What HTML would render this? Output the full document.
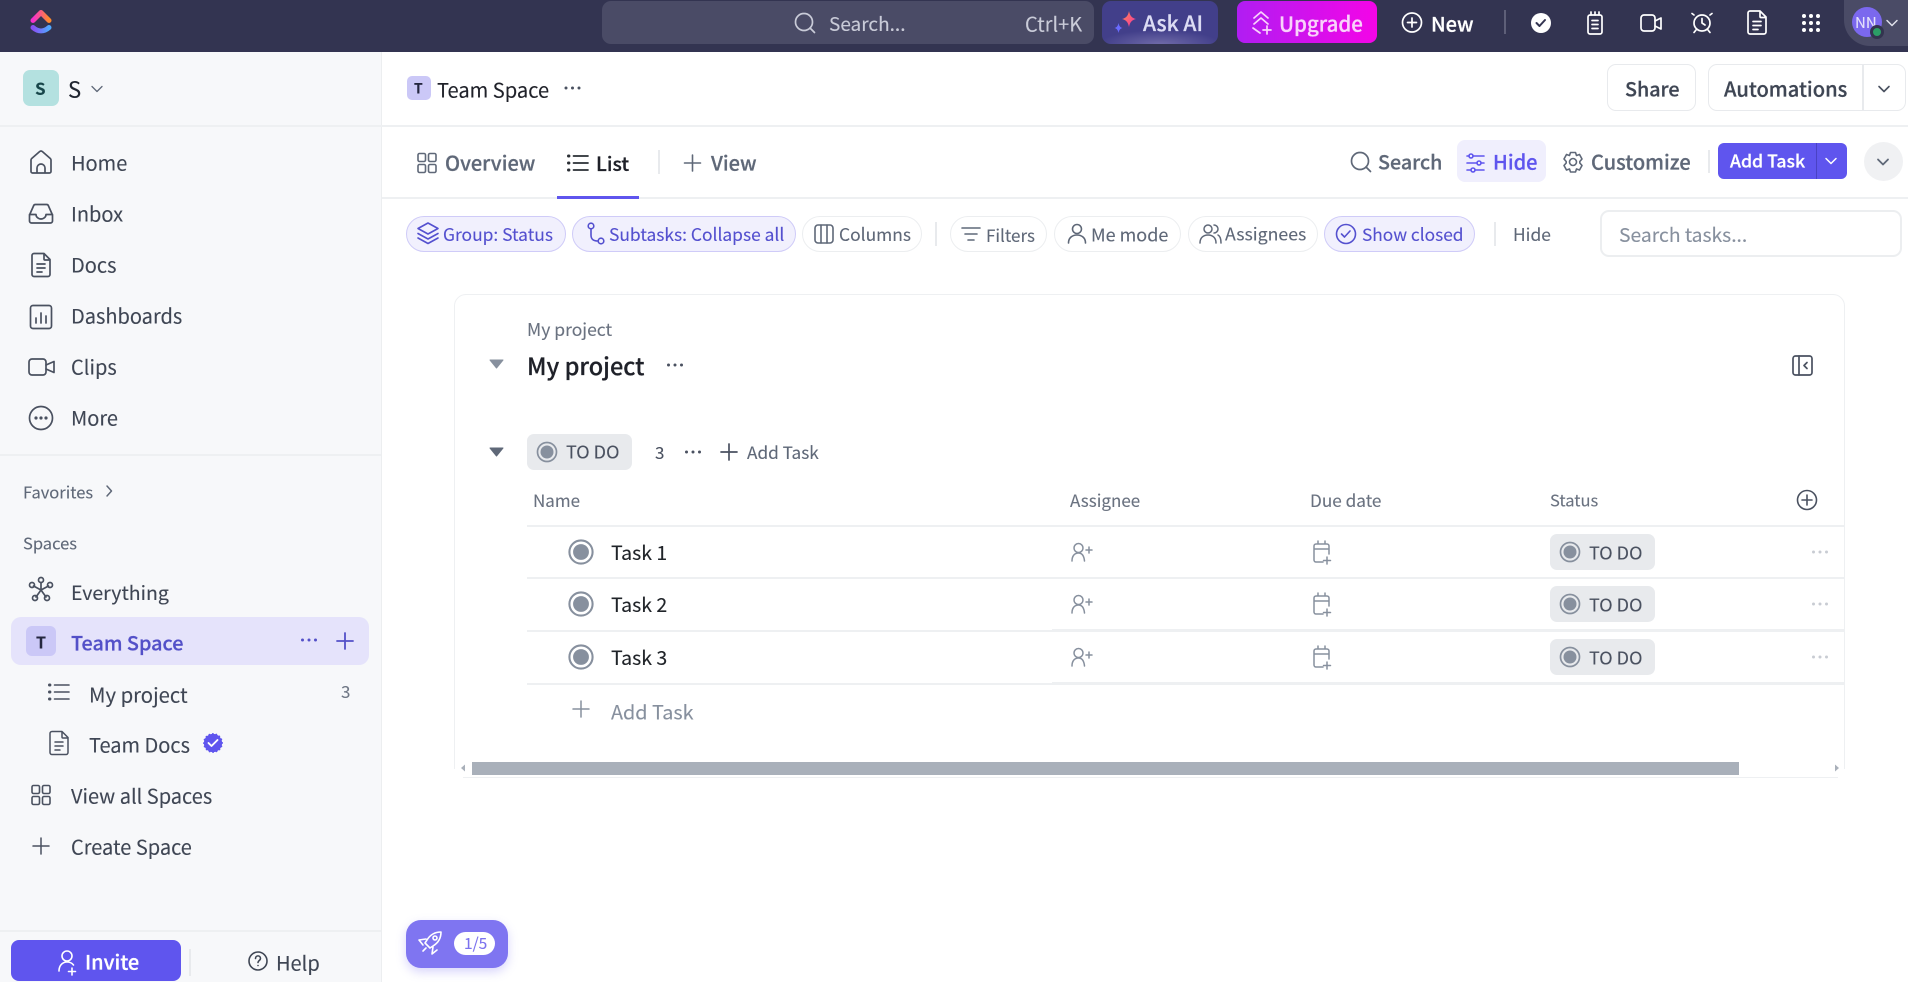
<!DOCTYPE html>
<html lang="en"><head><meta charset="utf-8"><title>Team Space</title>
<style>
*{box-sizing:border-box;margin:0;padding:0}
html,body{width:1908px;height:982px;overflow:hidden;background:#fff;font-family:"Noto Sans CJK JP","Liberation Sans",sans-serif;color:#202530}
.b{position:absolute}
.t{position:absolute;white-space:nowrap;line-height:1;transform:translateY(calc(-50% - 1.5px));font-size:20px;-webkit-text-stroke:.12px currentColor}
.t[style*="font-weight:500"]{-webkit-text-stroke:.25px currentColor}
.chip{position:absolute;top:216px;height:36px;border-radius:18px;border:1.5px solid #eceef0;background:#fff}
.chip.on{background:#f1f0fd;border-color:#cfcbf8}
.c{font-size:17.4px;top:235.5px;color:#5f6878}
.c.on{color:#5450cf}
.st{position:absolute;left:1550px;width:105px;height:36px;background:#e8eaed;border-radius:7px}
.line{position:absolute;background:#eef0f2}
svg{position:absolute;left:0;top:0;pointer-events:none}
</style></head><body>
<!-- header -->
<div class="b" style="left:0;top:0;width:1908px;height:52px;background:#333451"></div>
<div class="b" style="left:602px;top:1px;width:492px;height:43px;background:#4a4b66;border-radius:9px"></div>
<div class="b" style="left:1102px;top:1px;width:116px;height:43px;border-radius:9px;background:radial-gradient(ellipse 60px 14px at 50% 100%,#6f6aa8 0%,#423f8a 100%)"></div>
<div class="b" style="left:1237px;top:1px;width:140px;height:42px;border-radius:8px;background:linear-gradient(90deg,#b01df2,#f405e7)"></div>
<div class="b" style="left:1844px;top:0;width:64px;height:46px;background:#4a4b66;border-radius:0 0 0 26px"></div>
<div class="b" style="left:1504px;top:10px;width:2px;height:24px;background:#5e5f78"></div>
<span class="t" style="left:829px;top:25px;font-size:19px;color:#c9cbd8">Search...</span>
<span class="t" style="left:1025px;top:24.500px;font-size:20px;color:#c9cbd8">Ctrl+K</span>
<span class="t" style="left:1143px;top:25px;font-size:21px;color:#dcdcf4;font-weight:500">Ask AI</span>
<span class="t" style="left:1279px;top:24px;font-size:20.5px;color:#f9d2fb;font-weight:500">Upgrade</span>
<span class="t" style="left:1431px;top:25px;font-size:20px;color:#fff;font-weight:500">New</span>
<div class="b" style="left:1852px;top:7px;width:30px;height:30px;border-radius:50%;background:#7b68ee"></div>
<span class="t" style="left:1855px;top:24px;font-size:15px;color:#e5e2fb">NN</span>
<div class="b" style="left:1870px;top:25px;width:14px;height:14px;border-radius:50%;background:#2b9e66;border:3px solid #33344f"></div>

<!-- sidebar -->
<div class="b" style="left:0;top:52px;width:382px;height:930px;background:#f7f8fa;border-right:1.5px solid #eceef0"></div>
<div class="line" style="left:0;top:125px;width:1908px;height:1.5px"></div>
<div class="line" style="left:0;top:454px;width:381px;height:1.5px"></div>
<div class="line" style="left:0;top:930px;width:381px;height:1.5px"></div>
<div class="b" style="left:23px;top:70px;width:36px;height:36px;border-radius:7px;background:#b4e1e0"></div>
<span class="t" style="left:35px;top:89px;font-size:17px;color:#17464a;font-weight:700">S</span>
<span class="t" style="left:68px;top:90px;font-size:22px;color:#202530">S</span>
<span class="t" style="left:71px;top:164px;color:#3f4654">Home</span>
<span class="t" style="left:71px;top:215px;color:#3f4654">Inbox</span>
<span class="t" style="left:71px;top:266px;color:#3f4654">Docs</span>
<span class="t" style="left:71px;top:317px;color:#3f4654">Dashboards</span>
<span class="t" style="left:71px;top:368px;color:#3f4654">Clips</span>
<span class="t" style="left:71px;top:419px;color:#3f4654">More</span>
<span class="t" style="left:23px;top:493px;font-size:16.5px;color:#5f6878">Favorites</span>
<span class="t" style="left:23px;top:544px;font-size:16.5px;color:#5f6878">Spaces</span>
<span class="t" style="left:71px;top:592.500px;font-size:19.5px;color:#3f4654">Everything</span>
<div class="b" style="left:11px;top:617px;width:358px;height:48px;border-radius:10px;background:#e5e3fb"></div>
<div class="b" style="left:26px;top:626px;width:30px;height:30px;border-radius:6px;background:#cbc8f7"></div>
<span class="t" style="left:36px;top:642.500px;font-size:16px;color:#24263f;font-weight:700">T</span>
<span class="t" style="left:71px;top:644px;font-size:19.800px;color:#5350c8;font-weight:500">Team Space</span>
<span class="t" style="left:89px;top:695px;font-size:20.300px;color:#3f4654">My project</span>
<span class="t" style="left:341px;top:692px;font-size:17px;color:#6f7785">3</span>
<span class="t" style="left:89px;top:746px;color:#3f4654">Team Docs</span>
<span class="t" style="left:71px;top:797px;color:#3f4654">View all Spaces</span>
<span class="t" style="left:71px;top:848px;color:#3f4654">Create Space</span>
<div class="b" style="left:11px;top:940px;width:170px;height:41px;border-radius:8px;background:#5f55ee"></div>
<span class="t" style="left:85px;top:962.500px;font-size:20px;color:#fff;font-weight:500">Invite</span>
<div class="b" style="left:189px;top:949px;width:2px;height:27px;background:#e8eaed"></div>
<span class="t" style="left:276px;top:963.500px;font-size:20px;color:#3f4654">Help</span>

<!-- breadcrumb -->
<div class="b" style="left:407px;top:76px;width:24px;height:24px;border-radius:5px;background:#cbc8f7"></div>
<span class="t" style="left:414px;top:89.500px;font-size:14px;color:#24263f;font-weight:700">T</span>
<span class="t" style="left:437px;top:90.500px;font-size:20.1px;color:#1f2129">Team Space</span>
<div class="b" style="left:1607px;top:64px;width:89px;height:47px;border:1.5px solid #e8eaed;border-radius:9px"></div>
<span class="t" style="left:1625px;top:90px;font-size:19.700px;color:#3f4654;font-weight:500">Share</span>
<div class="b" style="left:1708px;top:64px;width:198px;height:47px;border:1.5px solid #e8eaed;border-radius:9px"></div>
<div class="b" style="left:1862px;top:65px;width:1.5px;height:45px;background:#e8eaed"></div>
<span class="t" style="left:1724px;top:90px;font-size:20.1px;color:#3f4654;font-weight:500">Automations</span>

<!-- tabs -->
<div class="line" style="left:382px;top:197px;width:1526px;height:1.5px"></div>
<div class="b" style="left:557px;top:196px;width:82px;height:3px;background:#5f55ee"></div>
<span class="t" style="left:445px;top:164px;color:#5f6878;font-weight:500">Overview</span>
<span class="t" style="left:596px;top:164px;font-size:19.5px;color:#1f2129;font-weight:500">List</span>
<div class="b" style="left:658px;top:150px;width:1.5px;height:24px;background:#e8eaed"></div>
<span class="t" style="left:711px;top:164px;color:#5f6878;font-weight:500">View</span>
<span class="t" style="left:1378px;top:163px;font-size:19.700px;color:#5f6878;font-weight:500">Search</span>
<div class="b" style="left:1457px;top:140px;width:89px;height:42px;border-radius:8px;background:#f0effd"></div>
<span class="t" style="left:1493px;top:163px;color:#5f55ee;font-weight:500">Hide</span>
<span class="t" style="left:1591px;top:163px;color:#5f6878;font-weight:500">Customize</span>
<div class="b" style="left:1708px;top:150px;width:1.5px;height:23px;background:#e8eaed"></div>
<div class="b" style="left:1718px;top:143px;width:129px;height:36px;border-radius:6px;background:#5f55ee"></div>
<div class="b" style="left:1816px;top:143px;width:1px;height:36px;background:#4a42c4"></div>
<span class="t" style="left:1730px;top:163px;font-size:17.6px;color:#fff;font-weight:500">Add Task</span>
<div class="b" style="left:1864px;top:142px;width:39px;height:39px;border-radius:50%;background:#f0f1f3"></div>

<!-- chips -->
<div class="chip on" style="left:406px;width:160px"></div><span class="t c on" style="left:443px">Group: Status</span>
<div class="chip on" style="left:572px;width:224px"></div><span class="t c on" style="left:609px">Subtasks: Collapse all</span>
<div class="chip" style="left:802px;width:120px"></div><span class="t c" style="left:839px">Columns</span>
<div class="b" style="left:935px;top:222px;width:1.5px;height:24px;background:#e8eaed"></div>
<div class="chip" style="left:950px;width:97px"></div><span class="t c" style="left:986px;font-size:17px">Filters</span>
<div class="chip" style="left:1054px;width:127px"></div><span class="t c" style="left:1091px;font-size:18px">Me mode</span>
<div class="chip" style="left:1188px;width:130px"></div><span class="t c" style="left:1225px;font-size:17.7px">Assignees</span>
<div class="chip on" style="left:1324px;width:151px"></div><span class="t c on" style="left:1362px;font-size:17.3px;top:235px">Show closed</span>
<div class="b" style="left:1494px;top:222px;width:1.5px;height:24px;background:#e8eaed"></div>
<span class="t c" style="left:1513px">Hide</span>
<div class="b" style="left:1600px;top:210px;width:302px;height:47px;border:2px solid #eceef0;border-radius:9px"></div>
<span class="t" style="left:1619px;top:236px;font-size:19.3px;color:#87909e">Search tasks...</span>

<!-- card -->
<div class="b" style="left:454px;top:294px;width:1391px;height:484px;border:1.5px solid #eef0f2;border-radius:12px 12px 0 0"></div>
<div class="b" style="left:453px;top:769px;width:10px;height:10px;background:#fff"></div>
<div class="b" style="left:1838px;top:769px;width:8px;height:10px;background:#fff"></div>
<span class="t" style="left:527px;top:331px;font-size:17.5px;color:#6a7280">My project</span>
<span class="t" style="left:527px;top:367px;font-size:23.5px;color:#1f2129;font-weight:500">My project</span>
<div class="b" style="left:527px;top:434px;width:105px;height:36px;border-radius:7px;background:#e8eaed"></div>
<span class="t" style="left:566px;top:453px;font-size:18px;color:#4a5160">TO DO</span>
<span class="t" style="left:655px;top:453px;font-size:17px;color:#4a5160">3</span>
<span class="t" style="left:747px;top:453px;font-size:17.200px;color:#5f6878">Add Task</span>
<span class="t" style="left:533px;top:501px;font-size:17px;color:#6a7280">Name</span>
<span class="t" style="left:1070px;top:501px;font-size:17px;color:#6a7280">Assignee</span>
<span class="t" style="left:1310px;top:501px;font-size:17.200px;color:#6a7280">Due date</span>
<span class="t" style="left:1550px;top:501px;font-size:16.500px;color:#6a7280">Status</span>
<div class="line" style="left:527px;top:525px;width:1317px;height:1.5px"></div>
<div class="line" style="left:527px;top:577px;width:1317px;height:1.5px"></div>
<div class="line" style="left:527px;top:630px;width:1317px;height:1.5px"></div>
<div class="line" style="left:1052px;top:629px;width:792px;height:2px"></div>
<div class="line" style="left:527px;top:683px;width:1317px;height:1.5px"></div>
<div class="line" style="left:1052px;top:682px;width:792px;height:2px"></div>
<span class="t" style="left:611px;top:553px;font-size:19.500px;color:#202429">Task 1</span>
<span class="t" style="left:611px;top:605px;font-size:19.500px;color:#202429">Task 2</span>
<span class="t" style="left:611px;top:658px;font-size:19.500px;color:#202429">Task 3</span>
<span class="t" style="left:611px;top:712.500px;font-size:19.800px;color:#87909e">Add Task</span>
<div class="st" style="top:534px"></div><span class="t" style="left:1589px;top:553.500px;font-size:18px;color:#4a5160">TO DO</span>
<div class="st" style="top:586px"></div><span class="t" style="left:1589px;top:605.500px;font-size:18px;color:#4a5160">TO DO</span>
<div class="st" style="top:639px"></div><span class="t" style="left:1589px;top:658.500px;font-size:18px;color:#4a5160">TO DO</span>
<div class="b" style="left:472px;top:762px;width:1267px;height:13px;background:#a9b0ba"></div>

<!-- rocket -->
<div class="b" style="left:406px;top:920px;width:102px;height:48px;border-radius:15px;background:#7f75f1;box-shadow:0 4px 10px rgba(127,117,241,.3)"></div>
<div class="b" style="left:454px;top:932px;width:41px;height:23px;border-radius:12px;background:#fff"></div>
<span class="t" style="left:464px;top:945px;font-size:15.5px;color:#7b72ee">1/5</span>

<svg width="1908" height="982" viewBox="0 0 1908 982" fill="none" stroke-linecap="round" stroke-linejoin="round">
<defs>
<linearGradient id="lg1" x1="0" y1="0" x2="1" y2="0"><stop offset="0" stop-color="#f52fd0"/><stop offset="1" stop-color="#ff8a2b"/></linearGradient>
<linearGradient id="lg2" x1="0" y1="0" x2="1" y2="0"><stop offset="0" stop-color="#8a4ff5"/><stop offset="1" stop-color="#4fa8ff"/></linearGradient>
<linearGradient id="sp" x1="0" y1="0" x2="1" y2="1"><stop offset="0" stop-color="#ff8a4a"/><stop offset="1" stop-color="#f52fa8"/></linearGradient>
<g id="grid"><rect x="-9" y="-9.5" width="7.5" height="8" rx="1.5"/><rect x="1.5" y="-9.5" width="7.5" height="8" rx="1.5"/><rect x="-9" y="1.5" width="7.5" height="8" rx="1.5"/><rect x="1.5" y="1.5" width="7.5" height="8" rx="1.5"/></g>
<g id="list"><path d="M-4.5-7H10M-4.5 0H10M-4.5 7H10"/><path d="M-9.5-7h.4M-9.5 0h.4M-9.5 7h.4" stroke-width="3"/></g>
<g id="doc"><path d="M-9-9.5a2 2 0 0 1 2-2H3L9-5.5V9.5a2 2 0 0 1-2 2H-7a2 2 0 0 1-2-2ZM3-11.5V-6a1 1 0 0 0 1 1H9M-4-1H4M-4 3H4M-4 7H1"/></g>
<g id="plus"><path d="M0-8V8M-8 0H8"/></g>
<g id="chev"><path d="M-5-2.5 0 2.5 5-2.5"/></g>
<g id="todo"><circle r="9.5" stroke="#87909e" stroke-width="1.7"/><circle r="6.5" fill="#87909e"/></g>
<g id="dots3"><circle cx="-6.5" r="1.5"/><circle r="1.5"/><circle cx="6.5" r="1.5"/></g>
<g id="aplus" stroke="#87909e" stroke-width="1.5"><circle cx="-2.5" cy="-4" r="4.5"/><path d="M-9 9c0-5 2.500-8 6.500-8s5.500 3 6 8M5-2h6M8-5v6"/></g>
<g id="cal" stroke="#87909e" stroke-width="1.5"><path d="M2 10H-5a2 2 0 0 1-2-2V-6a2 2 0 0 1 2-2H6a2 2 0 0 1 2 2V2M-7-3H8M-3-11v3M4-11v3M6 5v7M2.500 8.500h7"/></g>
</defs>

<!-- logo -->
<path d="M33 20.500 41 12.500 49 20.500" stroke="url(#lg1)" stroke-width="5"/>
<path d="M33 27.500C38 32 44 32 49 27.500" stroke="url(#lg2)" stroke-width="5"/>
<!-- header icons -->
<g stroke="#c9cbd8" stroke-width="1.7"><circle cx="804" cy="22" r="8.500"/><path d="M810 28l4.500 4.500"/></g>
<path d="M1129 11c1 5 3 7 7 8-4 1-6 3-7 8-1-5-3-7-7-8 4-1 6-3 7-8Z" fill="url(#sp)"/>
<path d="M1118.500 23c.6 3 1.700 4.400 4 5-2.300.6-3.400 2-4 5-.6-3-1.700-4.400-4-5 2.300-.6 3.400-2 4-5Z" fill="#6a6bff"/>
<g stroke="#f9d2fb" stroke-width="1.700"><path d="M1254 18l7-6 7 6M1254 24l7-6 7 6M1253 28l7 5M1267 26v8M1263 30h8"/></g>
<g stroke="#fff" stroke-width="1.7"><circle cx="1412" cy="22.500" r="9.500"/><path d="M1412 18v9M1407.500 22.500h9"/></g>
<circle cx="1541" cy="23" r="10" fill="#fff"/><path d="M1536.500 23l3 3 5.500-6" stroke="#333451" stroke-width="2"/>
<g stroke="#fff" stroke-width="1.700"><rect x="1588" y="15" width="14" height="19" rx="2"/><path d="M1592 20.500h6M1592 24.500h6M1592 28.500h6M1591 12v3M1595 12v3M1599 12v3"/></g>
<g stroke="#fff" stroke-width="1.700"><rect x="1641" y="15" width="14" height="16" rx="3"/><path d="M1655 21l6-3v11l-6-3"/></g>
<g stroke="#fff" stroke-width="1.700"><circle cx="1702" cy="23" r="8"/><path d="M1702 18.500V23l3 2M1694 15l-2-1.500M1710 15l2-1.500M1696 30l-2 2.500M1708 30l2 2.500"/></g>
<use href="#doc" x="1757" y="22.500" stroke="#fff" stroke-width="1.700"/>
<g fill="#fff"><circle cx="1804" cy="16" r="2"/><circle cx="1811" cy="16" r="2"/><circle cx="1818" cy="16" r="2"/><circle cx="1804" cy="23" r="2"/><circle cx="1811" cy="23" r="2"/><circle cx="1818" cy="23" r="2"/><circle cx="1804" cy="30" r="2"/><circle cx="1811" cy="30" r="2"/><circle cx="1818" cy="30" r="2"/></g>
<use href="#chev" x="1892" y="23" stroke="#dfe0ea" stroke-width="1.500"/>

<!-- sidebar icons -->
<use href="#chev" x="97" y="89" stroke="#5f6878" stroke-width="1.300"/>
<g stroke="#4a5160" stroke-width="1.700">
<path d="M31 171.500V160a2 2 0 0 1 .7-1.500l8-7a2 2 0 0 1 2.600 0l8 7a2 2 0 0 1 .7 1.500v11.500a1.500 1.500 0 0 1-1.500 1.500H32.500a1.500 1.500 0 0 1-1.500-1.500ZM37 173v-5a4 4 0 0 1 8 0v5"/>
<path d="M29.500 215v6a2 2 0 0 0 2 2h19a2 2 0 0 0 2-2v-6l-4-9a2 2 0 0 0-2-1.500H35.500a2 2 0 0 0-2 1.500ZM29.500 214.500H36a5 4.500 0 0 0 10 0h6.500"/>
<use href="#doc" x="41" y="265"/>
<rect x="30.500" y="305.500" width="21" height="23" rx="2.500"/><path d="M36 323v-5M41 323v-10M46 323v-7"/>
<rect x="29" y="359" width="17" height="16" rx="3"/><path d="M46 365l8-3.500v11L46 369"/>
<circle cx="41" cy="418" r="11.500"/>
<g fill="#4a5160" stroke="none"><circle cx="36" cy="418" r="1.600"/><circle cx="41" cy="418" r="1.600"/><circle cx="46" cy="418" r="1.600"/></g>
<path d="M41 583v7M41 590l-7.500-4M41 590l7.500-4M41 590l-5 7M41 590l5 7"/>
<circle cx="41" cy="580" r="2.500"/><circle cx="32" cy="585" r="2.500"/><circle cx="50" cy="585" r="2.500"/><circle cx="35" cy="598" r="2.500"/><circle cx="47" cy="598" r="2.500"/>
<use href="#list" x="59" y="692" stroke-width="1.600"/>
<use href="#doc" x="59" y="743" stroke-width="1.500"/>
<use href="#grid" x="41" y="795" stroke-width="1.600"/>
<use href="#plus" x="41" y="846" stroke-width="1.500"/>
</g>
<path d="M107 486l4.500 5-4.500 5" stroke="#5f6878" stroke-width="1.500"/>
<use href="#dots3" x="309" y="640" fill="#5350c8"/>
<g transform="translate(345 641)"><use href="#plus" stroke="#5350c8" stroke-width="1.800"/></g>
<g transform="translate(213 743)"><circle r="9" fill="#5f55ee" stroke="#5f55ee" stroke-width="2" stroke-dasharray="0 3.500"/><circle r="9" fill="#5f55ee"/><path d="M-4.500 0l3 3 6-6" stroke="#fff" stroke-width="1.900"/></g>
<g stroke="#fff" stroke-width="1.600"><circle cx="67" cy="956" r="5"/><path d="M59 971c0-5 3-9 8-9 3 0 5 1 6.500 3M72 968v7M68.500 971.500h7"/></g>
<g stroke="#3f4654" stroke-width="1.600"><circle cx="258" cy="961" r="9"/><path d="M255.500 958.500c0-3.500 5-3.500 5 0 0 2-2.500 2-2.500 4M258 965.500h.01"/></g>

<!-- breadcrumb icons -->
<use href="#dots3" x="572.500" y="88" fill="#4a5160"/>
<use href="#chev" x="1884" y="89" stroke="#4a5160" stroke-width="1.600"/>
<!-- tab icons -->
<use href="#grid" x="427" y="163" stroke="#5f6878" stroke-width="1.600"/>
<use href="#list" x="578" y="163" stroke="#2a2e34" stroke-width="1.700"/>
<use href="#plus" x="692.500" y="163" stroke="#5f6878" stroke-width="1.600"/>
<g stroke="#5f6878" stroke-width="1.700"><circle cx="1360" cy="161" r="8.500"/><path d="M1366 167l4.500 4.500"/></g>
<g stroke="#5f55ee" stroke-width="1.600"><path d="M1467 156h17M1467 163h17M1467 170h17"/><circle cx="1471" cy="156" r="2" fill="#f0effd"/><circle cx="1479" cy="163" r="2" fill="#f0effd"/><circle cx="1473" cy="170" r="2" fill="#f0effd"/></g>
<g stroke="#5f6878" stroke-width="1.600"><circle cx="1573" cy="162" r="3.500"/><path d="M1570.500 152.500h5l1 3 3-1 2.500 4.500-2.200 2.500 0 1.500 2.200 2.500-2.500 4.500-3-1-1 3h-5l-1-3-3 1-2.500-4.500 2.200-2.500 0-1.500-2.200-2.500 2.500-4.500 3 1Z"/></g>
<use href="#chev" x="1831" y="161" stroke="#fff" stroke-width="1.500"/>
<use href="#chev" x="1883" y="162" stroke="#5f6878" stroke-width="1.800"/>
<!-- chip icons -->
<g stroke="#5450cf" stroke-width="1.600"><path d="M428 223l10 5.500-10 5.500-10-5.500ZM418 233.500l10 5.500 10-5.500M418 238l10 5.500 10-5.500"/></g>
<g stroke="#5450cf" stroke-width="1.600"><circle cx="591" cy="226" r="2.800"/><circle cx="601" cy="241" r="2.800"/><path d="M591 229v6c0 4 2 6 7 6"/></g>
<g stroke="#5f6878" stroke-width="1.600"><rect x="815" y="225" width="18" height="18" rx="3"/><path d="M821 225v18M827 225v18"/></g>
<path d="M962 228h18M965 234h12M968 240h6" stroke="#5f6878" stroke-width="1.600"/>
<g stroke="#5f6878" stroke-width="1.600"><circle cx="1077" cy="229" r="4.500"/><path d="M1068.500 243c0-5 3.500-8 8.500-8s8.500 3 8.500 8"/></g>
<g stroke="#5f6878" stroke-width="1.500"><circle cx="1208" cy="229" r="4"/><path d="M1200 243c0-5 3-8 8-8s8 3 8 8M1214 225a4 4 0 0 1 0 8M1218 235c2 1 3 4 3 8"/></g>
<g stroke="#5450cf" stroke-width="1.600"><circle cx="1346" cy="234" r="9.500"/><path d="M1341.500 234l3 3 5.500-6"/></g>
<!-- card icons -->
<path d="M490 360h13l-6.500 8Z" fill="#87909e" stroke="#87909e" stroke-width="1"/>
<use href="#dots3" x="675" y="365" fill="#4a5160"/>
<g stroke="#4a5160" stroke-width="1.700"><rect x="1793" y="356" width="19" height="19" rx="2.500"/><path d="M1799 356v19M1807 362.500l-3 3 3 3"/></g>
<path d="M490 448h13l-6.500 8Z" fill="#5f6878" stroke="#5f6878" stroke-width="1"/>
<use href="#todo" x="547" y="452"/>
<use href="#dots3" x="693" y="452" fill="#4a5160"/>
<use href="#plus" x="729" y="452" stroke="#4a5160" stroke-width="1.700"/>
<g stroke="#4a5160" stroke-width="1.600"><circle cx="1807" cy="500" r="9.500"/><path d="M1807 495v10M1802 500h10"/></g>
<g transform="translate(581 552) scale(1.220)"><use href="#todo"/></g>
<g transform="translate(581 604) scale(1.220)"><use href="#todo"/></g>
<g transform="translate(581 657) scale(1.220)"><use href="#todo"/></g>
<use href="#plus" x="581" y="709" stroke="#87909e" stroke-width="1.500"/>
<use href="#aplus" x="1081" y="552"/><use href="#aplus" x="1081" y="604"/><use href="#aplus" x="1081" y="657"/>
<use href="#cal" x="1321" y="552"/><use href="#cal" x="1321" y="604"/><use href="#cal" x="1321" y="657"/>
<use href="#todo" x="1570" y="552"/><use href="#todo" x="1570" y="604"/><use href="#todo" x="1570" y="657"/>
<use href="#dots3" x="1820" y="552" fill="#c8ccd3"/><use href="#dots3" x="1820" y="604" fill="#c8ccd3"/><use href="#dots3" x="1820" y="657" fill="#c8ccd3"/>
<path d="M465 764.500v7l-4-3.500Z" fill="#a9b0ba"/><path d="M1835 764.500v7l4-3.500Z" fill="#a9b0ba"/>
<!-- rocket -->
<g stroke="#fff" stroke-width="1.600"><path d="M441 932c-6 0-11 3-14 8l-2 3 5 5 3-2c5-3 8-8 8-14ZM426 939l-7 1 4 5M433 947l-1 7 5-4M423 951l3-3"/><circle cx="435" cy="938" r="2"/></g>
</svg>
</body></html>
